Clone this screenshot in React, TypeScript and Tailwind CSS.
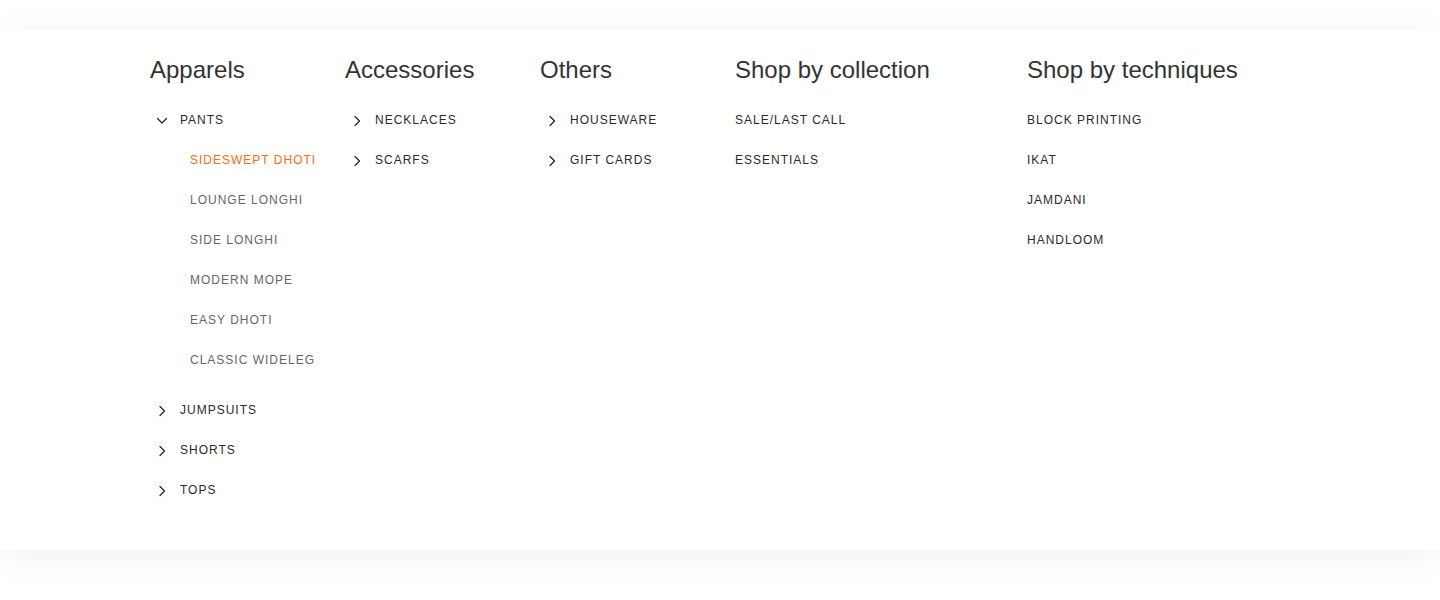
import React from "react";

const Chevron = ({ down = false }: { down?: boolean }) => (
  <svg width="12" height="12" viewBox="0 0 12 12" fill="none" stroke="#222" strokeWidth="1.2" strokeLinecap="round" strokeLinejoin="round">
    {down ? <path d="M1.5 3.5 L6 8 L10.5 3.5" /> : <path d="M4 1.5 L8.5 6 L4 10.5" />}
  </svg>
);

type Item = { label: string; chevron?: boolean; open?: boolean; children?: string[] };

const Row = ({ item }: { item: Item }) => (
  <div>
    <div className="flex h-10 items-center">
      {item.chevron && (
        <span className="flex w-[30px] shrink-0 items-center pl-[6px] pt-[1px]">
          <Chevron down={item.open} />
        </span>
      )}
      <span className="text-[12px] tracking-[1px] text-[#2a2a2a]">{item.label}</span>
    </div>
    {item.open && item.children && (
      <div className="mb-[10px] pl-[40px]">
        {item.children.map((c, i) => (
          <div key={c} className="flex h-10 items-center">
            <span className={`whitespace-nowrap text-[12px] tracking-[1px] ${i === 0 ? "text-[#ff6a14]" : "text-[#666]"}`}>{c}</span>
          </div>
        ))}
      </div>
    )}
  </div>
);

const Column = ({ title, items, width }: { title: string; items: Item[]; width: string }) => (
  <div className={width}>
    <h2 className="text-[24px] leading-[30px] text-[#333]">{title}</h2>
    <div className="mt-[15px]">
      {items.map((it) => (
        <Row key={it.label} item={it} />
      ))}
    </div>
  </div>
);

export default function App() {
  return (
    <div className="h-[600px] w-full bg-white pt-[30px]" style={{ fontFamily: '"Liberation Sans", Arial, sans-serif' }}>
      <div className="h-[520px] w-full bg-white px-[150px] pt-[25px] shadow-[0_6px_40px_rgba(0,0,0,0.06)]">
        <div className="flex">
          <Column
            title="Apparels"
            width="w-[195px] shrink-0"
            items={[
              {
                label: "PANTS",
                chevron: true,
                open: true,
                children: ["SIDESWEPT DHOTI", "LOUNGE LONGHI", "SIDE LONGHI", "MODERN MOPE", "EASY DHOTI", "CLASSIC WIDELEG"],
              },
              { label: "JUMPSUITS", chevron: true },
              { label: "SHORTS", chevron: true },
              { label: "TOPS", chevron: true },
            ]}
          />
          <Column
            title="Accessories"
            width="w-[195px] shrink-0"
            items={[
              { label: "NECKLACES", chevron: true },
              { label: "SCARFS", chevron: true },
            ]}
          />
          <Column
            title="Others"
            width="w-[195px] shrink-0"
            items={[
              { label: "HOUSEWARE", chevron: true },
              { label: "GIFT CARDS", chevron: true },
            ]}
          />
          <Column
            title="Shop by collection"
            width="w-[292px] shrink-0"
            items={[{ label: "SALE/LAST CALL" }, { label: "ESSENTIALS" }]}
          />
          <Column
            title="Shop by techniques"
            width="flex-1"
            items={[{ label: "BLOCK PRINTING" }, { label: "IKAT" }, { label: "JAMDANI" }, { label: "HANDLOOM" }]}
          />
        </div>
      </div>
    </div>
  );
}
